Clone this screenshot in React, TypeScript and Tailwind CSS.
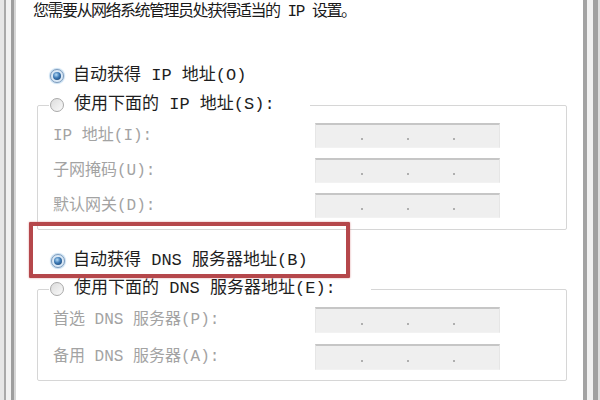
import type { ReactNode } from 'react';

const font = "font-[family-name:'Liberation_Mono','Noto_Sans_CJK_SC',monospace]";

function Radio({ checked = false }: { checked?: boolean }) {
  return (
    <span
      className={
        checked
          ? 'flex h-[14px] w-[14px] shrink-0 items-center justify-center rounded-full border border-[#7f9cbc] bg-[#dbe9f6] shadow-[0_0_1px_1px_#c4dcf0]'
          : 'flex h-[14px] w-[14px] shrink-0 items-center justify-center rounded-full border border-[#a9a9a9] bg-gradient-to-br from-[#dcdcdc] to-[#fafafa]'
      }
    >
      {checked && (
        <span className="h-[8px] w-[8px] rounded-full bg-[radial-gradient(circle_at_40%_35%,#b6dcf7_0%,#3b78b4_45%,#143a66_100%)]" />
      )}
    </span>
  );
}

function AddressBox({ tall = false }: { tall?: boolean }) {
  return (
    <div
      className={`flex w-[185px] items-end justify-center gap-[44px] border-x border-b border-t-2 border-x-[#e6e6e6] border-b-[#f2f2f2] border-t-[#c6c6c6] bg-[#efefef] pb-[7px] ${
        tall ? 'h-[26px]' : 'h-[25px]'
      }`}
    >
      <span className="h-[2px] w-[2px] rounded-full bg-[#9a9a9a]" />
      <span className="h-[2px] w-[2px] rounded-full bg-[#9a9a9a]" />
      <span className="h-[2px] w-[2px] rounded-full bg-[#9a9a9a]" />
    </div>
  );
}

function FieldRow({ label, tall }: { label: string; tall?: boolean }) {
  return (
    <div className="flex items-center">
      <span className="w-[277px] pl-[15px] text-[16px] leading-[20px] text-[#a3a3a3]">{label}</span>
      <AddressBox tall={tall} />
    </div>
  );
}

function Group({ legend, children, className }: { legend: ReactNode; children: ReactNode; className: string }) {
  return (
    <fieldset className={`ml-[21px] w-[530px] rounded-[2px] border border-[#d6d6d6] p-0 ${className}`}>
      <legend className="ml-[11px] flex h-[20px] items-center gap-[10px] bg-white pl-[1px] pr-[35px] text-[17px] leading-[20px] text-[#1e1e1e]">
        {legend}
      </legend>
      {children}
    </fieldset>
  );
}

export default function App() {
  return (
    <div className={`flex h-[400px] w-[600px] overflow-hidden bg-white ${font}`}>
      <div className="flex h-full w-[16px] shrink-0">
        <span className="w-[4px] bg-[#e6e6e6]" />
        <span className="w-[2px] bg-[#a9a9a9]" />
        <span className="w-[5px] bg-[#f1f1f1]" />
        <span className="w-[3px] bg-[#9e9e9e]" />
        <span className="w-[2px] bg-[#d6d6d6]" />
      </div>

      <div className="flex w-[567px] shrink-0 flex-col">
        <div className="mt-[-16px] pl-[17px] text-[16px] leading-[19px] tracking-[-1.5px] whitespace-nowrap text-[#1a1a1a]">
          <p>如果网络支持此功能，则可以获取自动指派的 IP 设置。否则，</p>
          <p>您需要从网络系统管理员处获得适当的 IP 设置。</p>
        </div>

        <div className="mt-[44px] flex h-[20px] items-center gap-[9px] pl-[34px] text-[17px] leading-[20px] text-[#1e1e1e]">
          <Radio checked />
          <span>自动获得 IP 地址(O)</span>
        </div>

        <Group
          className="mt-[9px] pb-[11px]"
          legend={
            <>
              <Radio />
              <span>使用下面的 IP 地址(S):</span>
            </>
          }
        >
          <div className="mt-[8px] flex flex-col gap-[10px]">
            <FieldRow label="IP 地址(I):" />
            <FieldRow label="子网掩码(U):" />
            <FieldRow label="默认网关(D):" />
          </div>
        </Group>

        <div className="relative z-10 mt-[-8px] ml-[13px] flex h-[56px] w-[321px] flex-col justify-end rounded-[1px] border-[4px] border-[#b5474b] pb-[3px] pl-[18px] shadow-[0_0_2px_#d88a8c]">
          <div className="flex h-[20px] items-center gap-[8px] text-[17px] leading-[20px] text-[#1e1e1e]">
            <Radio checked />
            <span>自动获得 DNS 服务器地址(B)</span>
          </div>
        </div>

        <Group
          className="mt-[1px] pb-[10px]"
          legend={
            <>
              <Radio />
              <span>使用下面的 DNS 服务器地址(E):</span>
            </>
          }
        >
          <div className="mt-[8px] flex flex-col gap-[11px]">
            <FieldRow label="首选 DNS 服务器(P):" tall />
            <FieldRow label="备用 DNS 服务器(A):" tall />
          </div>
        </Group>
      </div>

      <div className="flex h-full w-[17px] shrink-0">
        <span className="w-[4px] bg-[#a3a3a3]" />
        <span className="w-[6px] bg-[#f1f1f1]" />
        <span className="w-[5px] bg-[#a0a0a0]" />
        <span className="w-[2px] bg-[#dedede]" />
      </div>
    </div>
  );
}
